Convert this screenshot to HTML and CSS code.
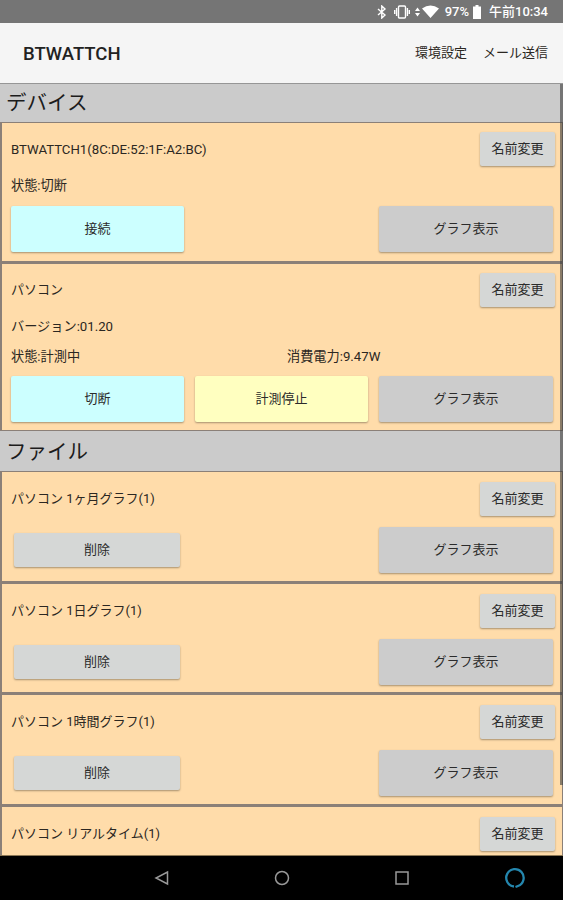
FILE: index.html
```html
<!DOCTYPE html>
<html lang="ja">
<head>
  <meta charset="UTF-8" />
  <title>BTWATTCH</title>
  <link rel="stylesheet" href="styles.css">
</head>
<body>
  <div class="status-bar">
    <svg class="icon-bluetooth" width="10" height="14" viewBox="0 0 10 14"><path d="M1 4l7 6-3.2 3V1L8 4l-7 6" /></svg>
    <svg class="icon-vibrate" width="16" height="14" viewBox="0 0 16 14"><rect x="4.5" y="1" width="7" height="12" rx="1" /><path d="M2.6 3v8M13.4 3v8M.7 5v4M15.3 5v4" /></svg>
    <svg class="icon-wifi" width="24" height="14" viewBox="0 0 24 14"><path d="M0 6l2.5-3.5L5 6zM0 8h5l-2.5 3.5zM7 3.5q8.500-6 17 0L15.500 13z" /></svg>
    <span class="battery-text">97%</span>
    <svg class="icon-battery" width="8" height="14" viewBox="0 0 8 14"><path d="M2.500 0h3v1.500H8V14H0V1.500h2.500z" /></svg>
    <span class="clock">午前10:34</span>
  </div>

  <header class="app-bar">
    <h1>BTWATTCH</h1>
    <nav class="menu">
      <a>環境設定</a>
      <a>メール送信</a>
    </nav>
  </header>

  <main class="list">
    <h2>デバイス</h2>
    <div class="card">
      <div class="card-head"><span class="device-name">BTWATTCH1(8C:DE:52:1F:A2:BC)</span><button class="btn rename">名前変更</button></div>
      <div class="info"><span>状態:切断</span></div>
      <div class="actions">
        <button class="btn connect">接続</button>
        <button class="btn graph">グラフ表示</button>
      </div>
    </div>
    <div class="card last">
      <div class="card-head"><span>パソコン</span><button class="btn rename">名前変更</button></div>
      <div class="info"><span>バージョン:01.20</span></div>
      <div class="info state"><span>状態:計測中</span><span>消費電力:9.47W</span></div>
      <div class="actions">
        <button class="btn connect">切断</button>
        <button class="btn stop">計測停止</button>
        <button class="btn graph">グラフ表示</button>
      </div>
    </div>

    <h2 class="files">ファイル</h2>
    <div class="card file">
      <div class="card-head"><span>パソコン 1ヶ月グラフ(1)</span><button class="btn rename">名前変更</button></div>
      <div class="actions">
        <button class="btn delete">削除</button>
        <button class="btn graph">グラフ表示</button>
      </div>
    </div>
    <div class="card file">
      <div class="card-head"><span>パソコン 1日グラフ(1)</span><button class="btn rename">名前変更</button></div>
      <div class="actions">
        <button class="btn delete">削除</button>
        <button class="btn graph">グラフ表示</button>
      </div>
    </div>
    <div class="card file">
      <div class="card-head"><span>パソコン 1時間グラフ(1)</span><button class="btn rename">名前変更</button></div>
      <div class="actions">
        <button class="btn delete">削除</button>
        <button class="btn graph">グラフ表示</button>
      </div>
    </div>
    <div class="card file">
      <div class="card-head"><span>パソコン リアルタイム(1)</span><button class="btn rename">名前変更</button></div>
    </div>
    <div class="scrollbar"></div>
  </main>

  <footer class="nav-bar">
    <svg width="16" height="16" viewBox="0 0 16 16"><path d="M13.500 2v12L2 8z" /></svg>
    <svg width="16" height="16" viewBox="0 0 16 16"><circle cx="8" cy="8" r="6.500" /></svg>
    <svg width="16" height="16" viewBox="0 0 16 16"><rect x="2" y="2" width="12" height="12" /></svg>
    <svg class="alexa" width="22" height="22" viewBox="0 0 22 22"><path d="M10 19.500A8.700 8.700 0 1 1 14 19L11.500 20" /></svg>
  </footer>
</body>
</html>
```

FILE: styles.css
```css
:root {
  --card: #ffdcaa;
  --line: #8b8078;
  --section: #cbcbcb;
}

* {
  box-sizing: border-box;
}

body {
  margin: 0;
  height: 900px;
  display: flex;
  flex-direction: column;
  overflow: hidden;
  background: #000;
  color: #2b2722;
  font-family: Roboto, "Noto Sans CJK JP", sans-serif;
  font-size: 13px;
}

.status-bar {
  flex: none;
  height: 23px;
  padding-right: 15px;
  display: flex;
  align-items: center;
  justify-content: flex-end;
  background: #757575;
  color: #fff;
  line-height: 23px;
}

.status-bar svg {
  fill: #fff;
}

.status-bar .icon-bluetooth,
.status-bar .icon-vibrate {
  fill: none;
  stroke: #fff;
  stroke-width: 1.4;
}

.icon-bluetooth {
  margin-right: 7px;
}

.icon-vibrate {
  margin-right: 5px;
}

.icon-wifi {
  margin-right: 6px;
}

.battery-text {
  font-weight: 500;
  font-size: 13px;
  margin-right: 4px;
}

.icon-battery {
  margin-right: 8px;
}

.clock {
  font-weight: 500;
}

.app-bar {
  flex: none;
  height: 60px;
  padding: 1px 15px 0 23px;
  display: flex;
  align-items: center;
  justify-content: space-between;
  background: #f5f5f5;
}

h1 {
  margin: 0;
  font-size: 18.5px;
  font-weight: 500;
  color: #222;
}

.menu {
  display: flex;
  gap: 16px;
  padding-bottom: 4px;
}

.list {
  flex: none;
  position: relative;
  height: 773px;
  overflow: hidden;
  border-bottom: 1px solid #8b7755;
}

h2 {
  margin: 0;
  height: 39px;
  padding-left: 6px;
  border-top: 1px solid #969696;
  background: var(--section);
  color: #1c1c1c;
  font-size: 20.5px;
  font-weight: 400;
  line-height: 38px;
}

h2.files {
  height: 40px;
  border-top: none;
  line-height: 42px;
}

.card {
  height: 141px;
  padding: 9px 8px 0 9px;
  background: var(--card);
  border: 2px solid var(--line);
  border-top-width: 1px;
  border-right-width: 1px;
}

.card.last {
  height: 168px;
  border-bottom-width: 1px;
}

.card.file {
  height: 111.6px;
  padding-top: 10px;
}

.card-head {
  height: 34px;
  display: flex;
  align-items: center;
  justify-content: space-between;
}

.card-head span {
  padding-bottom: 3px;
}

.card-head .device-name {
  padding-bottom: 0;
  font-size: 13.2px;
}

.info {
  height: 30px;
  margin-top: 5px;
  font-size: 13.2px;
  line-height: 30px;
}

.info.state {
  display: grid;
  grid-template-columns: 276px 1fr;
  height: 29px;
  margin-top: 0;
}

.actions {
  display: grid;
  grid-template-columns: 173px 173px 174px;
  column-gap: 11px;
  align-items: center;
  height: 46px;
  margin-top: 5px;
}

.file .actions {
  margin-top: 11px;
}

.btn {
  height: 46px;
  padding: 0 0 3px;
  border: none;
  border-radius: 2px;
  background: #d5d7d6;
  color: #2b2b2b;
  font: inherit;
  box-shadow: 0 1px 2px rgba(0, 0, 0, 0.35);
}

.btn.rename {
  width: 75px;
  height: 34px;
  margin-right: -1px;
}

.btn.connect {
  background: #ccffff;
}

.btn.stop {
  background: #ffffc0;
}

.btn.graph {
  grid-column: 3;
  background: #cccccc;
}

.btn.delete {
  height: 34px;
  margin: 0 4px 0 3px;
}

.scrollbar {
  position: absolute;
  top: 1px;
  right: 0;
  width: 3px;
  height: 701px;
  background: rgba(60, 60, 60, 0.6);
}

.nav-bar {
  flex: none;
  height: 44px;
  display: flex;
  align-items: center;
  gap: 104px;
  padding-left: 154px;
}

.nav-bar svg {
  fill: none;
  stroke: #999;
  stroke-width: 1.5;
}

.nav-bar .alexa {
  margin-left: -10px;
  stroke: #2487ae;
  stroke-width: 2.3;
}
```
